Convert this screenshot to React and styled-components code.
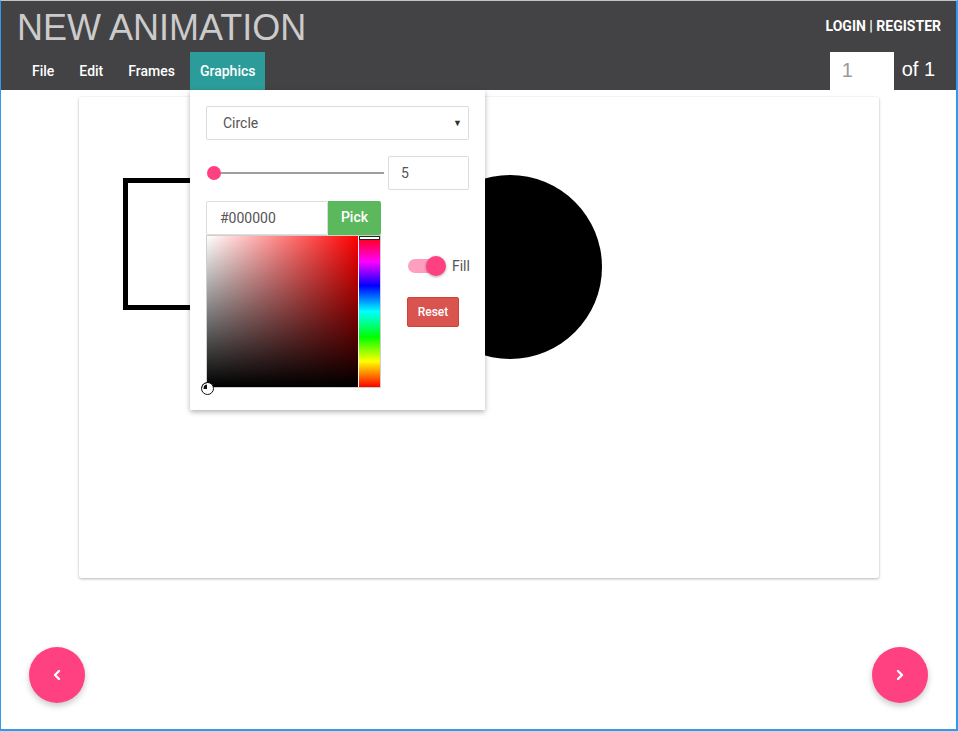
import React from "react";
import styled, { createGlobalStyle } from "styled-components";
import { ChevronLeft, ChevronRight } from "lucide-react";

const GlobalStyle = createGlobalStyle`
  html, body {
    margin: 0;
    padding: 0;
    background: #fff;
  }
  * {
    box-sizing: border-box;
  }
`;

// Layout
const Frame = styled.div`
  position: relative;
  width: 958px;
  height: 731px;
  border-top: 1px solid #c4c4c4;
  border-left: 1px solid #2d9bf0;
  border-right: 2px solid #2d9bf0;
  border-bottom: 2px solid #2d9bf0;
  overflow: hidden;
  font-family: Roboto, "Liberation Sans", sans-serif;
`;

const Header = styled.header`
  height: 89px;
  background: #434244;
  display: flex;
  justify-content: space-between;
  padding: 0 15px 0 16px;
`;

const LeftCol = styled.div`
  display: flex;
  flex-direction: column;
  justify-content: space-between;
`;

const Title = styled.h1`
  margin: 7px 0 0;
  font-family: "Liberation Sans", Arial, sans-serif;
  font-weight: 400;
  font-size: 36px;
  line-height: 40px;
  color: #cbcbcb;
`;

const Nav = styled.nav`
  display: flex;
  gap: 5px;
  margin-left: 5px;
`;

const NavItem = styled.div`
  position: relative;
  height: 38px;
  padding: 0 10px;
  display: flex;
  align-items: center;
  font-size: 14px;
  font-weight: 500;
  color: #fff;
  background: ${(p) => (p.active ? "#2b9c9a" : "transparent")};
`;

const RightCol = styled.div`
  display: flex;
  flex-direction: column;
  justify-content: space-between;
  align-items: flex-end;
`;

const Auth = styled.div`
  margin-top: 17px;
  font-size: 14px;
  font-weight: 700;
  color: #fff;
`;

const Pager = styled.div`
  display: flex;
  align-items: center;
  gap: 8px;
  margin-right: 6px;
`;

const PageInput = styled.div`
  width: 64px;
  height: 38px;
  background: #fff;
  color: #9a9a9a;
  font-family: "Liberation Sans", Arial, sans-serif;
  font-size: 20px;
  padding: 7px 0 0 12px;
`;

const PageOf = styled.span`
  color: #fff;
  font-family: "Liberation Sans", Arial, sans-serif;
  font-size: 20px;
  padding-bottom: 4px;
`;

// Canvas
const Main = styled.main`
  display: flex;
  justify-content: center;
  padding-top: 7px;
`;

const Card = styled.div`
  width: 800px;
  height: 481px;
  background: #fff;
  border-radius: 2px;
  box-shadow: 0 1px 3px rgba(0, 0, 0, 0.28), 0 0 1px rgba(0, 0, 0, 0.12);
`;

// Dropdown panel
const Menu = styled.div`
  position: absolute;
  top: 38px;
  left: 0;
  width: 295px;
  background: #fff;
  padding: 16px 16px 22px;
  display: flex;
  flex-direction: column;
  box-shadow: 0 2px 5px rgba(0, 0, 0, 0.3);
  z-index: 5;
  font-weight: 400;
`;

const Field = styled.div`
  height: 34px;
  border: 1px solid #dcdcdc;
  border-radius: 2px;
  background: #fff;
  display: flex;
  align-items: center;
  padding-left: ${(p) => p.pad || 12}px;
  color: #555;
  font-size: 14px;
  width: ${(p) => (p.w ? `${p.w}px` : "auto")};
`;

const Select = styled(Field)`
  justify-content: space-between;
  padding-right: 6px;
`;

const Caret = styled.span`
  font-size: 9px;
  color: #333;
`;

const SliderRow = styled.div`
  margin-top: 16px;
  display: flex;
  align-items: center;
  justify-content: space-between;
`;

const Track = styled.div`
  position: relative;
  width: 174px;
  height: 2px;
  margin-left: 4px;
  background: #9e9e9e;
`;

const Thumb = styled.div`
  position: absolute;
  left: -3px;
  top: -6px;
  width: 14px;
  height: 14px;
  border-radius: 50%;
  background: #ff4081;
`;

const ColorRow = styled.div`
  margin-top: 11px;
  display: flex;
  gap: 26px;
`;

const PickerCol = styled.div`
  width: 175px;
  display: flex;
  flex-direction: column;
`;

const HexRow = styled.div`
  display: flex;
`;

const PickButton = styled.div`
  width: 53px;
  height: 34px;
  background: #5cb85c;
  color: #fff;
  font-size: 14px;
  font-weight: 500;
  display: flex;
  align-items: center;
  justify-content: center;
  padding-bottom: 2px;
  border-radius: 0 2px 2px 0;
`;

const Picker = styled.div`
  display: flex;
  height: 153px;
  border: 1px solid #cfcfcf;
`;

const Saturation = styled.div`
  position: relative;
  width: 151px;
  background: linear-gradient(to top, #000, rgba(0, 0, 0, 0)),
    linear-gradient(to right, #fff, #f00);
`;

const Cursor = styled.div`
  position: absolute;
  left: -6px;
  bottom: -8px;
  width: 13px;
  height: 13px;
  border-radius: 50%;
  border: 1.5px solid #111;
  background: conic-gradient(#fff 0 75%, #111 75% 100%);
  box-shadow: inset 0 0 0 1.5px #fff;
`;

const Hue = styled.div`
  position: relative;
  flex: 1;
  border-left: 1px solid #fff;
  background: linear-gradient(
    to bottom,
    #f00 0%,
    #f0f 17%,
    #00f 33%,
    #0ff 50%,
    #0f0 67%,
    #ff0 83%,
    #f00 100%
  );
`;

const HueMarker = styled.div`
  position: absolute;
  top: 0;
  left: 0;
  right: 0;
  height: 4px;
  background: #fff;
  border: 1px solid #222;
`;

const SideCol = styled.div`
  display: flex;
  flex-direction: column;
  align-items: flex-start;
  padding-top: 57px;
`;

const ToggleRow = styled.div`
  display: flex;
  align-items: center;
  gap: 8px;
  font-size: 14px;
  color: #555;
`;

const Switch = styled.div`
  position: relative;
  width: 36px;
  height: 14px;
  margin-left: 1px;
  border-radius: 7px;
  background: #ff9fbf;
`;

const Knob = styled.div`
  position: absolute;
  right: -2px;
  top: -3px;
  width: 20px;
  height: 20px;
  border-radius: 50%;
  background: #ff4081;
  box-shadow: 0 1px 3px rgba(0, 0, 0, 0.35);
`;

const ResetButton = styled.div`
  margin-top: 23px;
  width: 52px;
  height: 30px;
  background: #d9534f;
  border: 1px solid #d43f3a;
  border-radius: 2px;
  color: #fff;
  font-size: 12px;
  font-weight: 500;
  display: flex;
  align-items: center;
  justify-content: center;
  padding-bottom: 1px;
`;

// Floating buttons
const Fab = styled.div`
  position: absolute;
  bottom: 26px;
  ${(p) => (p.side === "left" ? "left: 28px;" : "right: 28px;")}
  width: 56px;
  height: 56px;
  border-radius: 50%;
  background: #ff4081;
  display: flex;
  align-items: center;
  justify-content: center;
  color: #fff;
  box-shadow: 0 3px 6px rgba(0, 0, 0, 0.22);
`;

const App = () => {
  return (
    <Frame>
      <GlobalStyle />
      <Header>
        <LeftCol>
          <Title>NEW ANIMATION</Title>
          <Nav>
            <NavItem>File</NavItem>
            <NavItem>Edit</NavItem>
            <NavItem>Frames</NavItem>
            <NavItem active>
              Graphics
              <Menu>
                <Select pad={16}>
                  Circle
                  <Caret>▼</Caret>
                </Select>
                <SliderRow>
                  <Track>
                    <Thumb />
                  </Track>
                  <Field w={81}>5</Field>
                </SliderRow>
                <ColorRow>
                  <PickerCol>
                    <HexRow>
                      <Field w={122} pad={13}>
                        #000000
                      </Field>
                      <PickButton>Pick</PickButton>
                    </HexRow>
                    <Picker>
                      <Saturation>
                        <Cursor />
                      </Saturation>
                      <Hue>
                        <HueMarker />
                      </Hue>
                    </Picker>
                  </PickerCol>
                  <SideCol>
                    <ToggleRow>
                      <Switch>
                        <Knob />
                      </Switch>
                      Fill
                    </ToggleRow>
                    <ResetButton>Reset</ResetButton>
                  </SideCol>
                </ColorRow>
              </Menu>
            </NavItem>
          </Nav>
        </LeftCol>
        <RightCol>
          <Auth>LOGIN | REGISTER</Auth>
          <Pager>
            <PageInput>1</PageInput>
            <PageOf>of 1</PageOf>
          </Pager>
        </RightCol>
      </Header>

      <Main>
        <Card>
          <svg width="800" height="481">
            <rect
              x="46.5"
              y="83.5"
              width="230"
              height="127"
              fill="none"
              stroke="#000"
              strokeWidth="5"
            />
            <circle cx="431" cy="170" r="92" fill="#000" />
          </svg>
        </Card>
      </Main>

      <Fab side="left">
        <ChevronLeft size={16} strokeWidth={3.5} />
      </Fab>
      <Fab side="right">
        <ChevronRight size={16} strokeWidth={3.5} />
      </Fab>
    </Frame>
  );
};

export default App;
